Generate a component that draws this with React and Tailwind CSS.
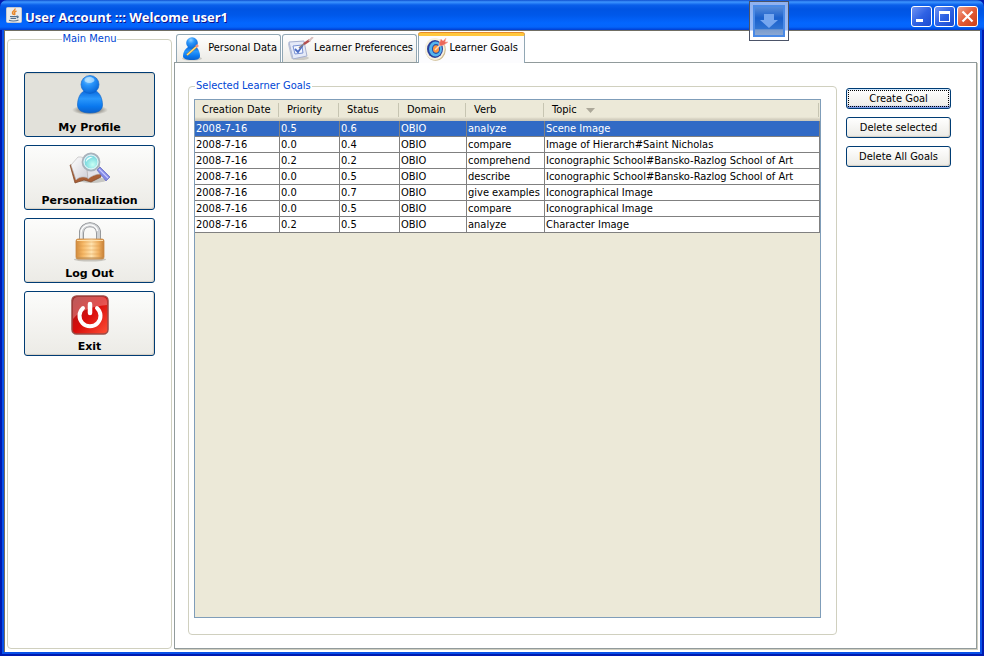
import { useState } from "react";

const goals = [
  { date: "2008-7-16", priority: "0.5", status: "0.6", domain: "OBIO", verb: "analyze", topic: "Scene Image" },
  { date: "2008-7-16", priority: "0.0", status: "0.4", domain: "OBIO", verb: "compare", topic: "Image of Hierarch#Saint Nicholas" },
  { date: "2008-7-16", priority: "0.2", status: "0.2", domain: "OBIO", verb: "comprehend", topic: "Iconographic School#Bansko-Razlog School of Art" },
  { date: "2008-7-16", priority: "0.0", status: "0.5", domain: "OBIO", verb: "describe", topic: "Iconographic School#Bansko-Razlog School of Art" },
  { date: "2008-7-16", priority: "0.0", status: "0.7", domain: "OBIO", verb: "give examples", topic: "Iconographical Image" },
  { date: "2008-7-16", priority: "0.0", status: "0.5", domain: "OBIO", verb: "compare", topic: "Iconographical Image" },
  { date: "2008-7-16", priority: "0.2", status: "0.5", domain: "OBIO", verb: "analyze", topic: "Character Image" },
];

const columns = [
  { key: "date", label: "Creation Date", width: "w-[85px]" },
  { key: "priority", label: "Priority", width: "w-[60px]" },
  { key: "status", label: "Status", width: "w-[60px]" },
  { key: "domain", label: "Domain", width: "w-[67px]" },
  { key: "verb", label: "Verb", width: "w-[78px]" },
  { key: "topic", label: "Topic", width: "", sorted: true },
];

/* Icons */
function JavaIcon() {
  return (
    <svg width="16" height="16" viewBox="0 0 16 16" fill="none">
      <rect x="0.5" y="0.5" width="15" height="15" rx="1" fill="#ececec" stroke="#c4c8d0" />
      <path d="M9 1.5C9.5 3.5 6 4 6.500 6C6.700 7 7.500 7.300 7.500 8M10.500 4C8.500 4.700 8 5.500 8.700 6.500C9 7.200 8.700 7.700 8.300 8" stroke="#e8872b" strokeWidth="1.500" />
      <path d="M4 9.500H10.500M4.500 11.300H10M10.500 9.300C12.500 8.800 12.800 10.300 10.600 11M3 13.300C5 14.300 10 14.300 12.500 13" stroke="#54708f" strokeWidth="1.200" />
    </svg>
  );
}

function ProfileIcon() {
  return (
    <svg width="36" height="42" viewBox="0 0 36 42" className="block">
      <defs>
        <radialGradient id="profileHead" cx="0.4" cy="0.25" r="0.75">
          <stop offset="0" stopColor="#8fd0ff" />
          <stop offset="0.400" stopColor="#2b96fb" />
          <stop offset="1" stopColor="#0766d8" />
        </radialGradient>
        <linearGradient id="profileBody" x1="0" y1="0" x2="0" y2="1">
          <stop offset="0" stopColor="#0b6adf" />
          <stop offset="0.350" stopColor="#2a98fc" />
          <stop offset="0.700" stopColor="#0a78ee" />
          <stop offset="1" stopColor="#0a60cb" />
        </linearGradient>
        <radialGradient id="profileShadow">
          <stop offset="0.500" stopColor="#6b675f" stopOpacity="0.700" />
          <stop offset="1" stopColor="#6b675f" stopOpacity="0" />
        </radialGradient>
      </defs>
      <ellipse cx="18" cy="35" rx="18" ry="5" fill="url(#profileShadow)" />
      <path d="M12 16C8 18 5.500 24 5.500 30C5.500 35 10 38 18 38C26 38 30.500 35 30.500 30C30.500 24 28 18 24 16Z" fill="url(#profileBody)" stroke="#0a5fc5" strokeWidth="0.600" />
      <circle cx="18" cy="9.500" r="9" fill="url(#profileHead)" stroke="#0a5fc5" strokeWidth="0.600" />
      <ellipse cx="17.500" cy="5" rx="5" ry="3" fill="#d9f1ff" opacity="0.600" />
    </svg>
  );
}

function BookSearchIcon() {
  return (
    <svg width="42" height="34" viewBox="0 0 42 34" className="block">
      <defs>
        <linearGradient id="bookPage" x1="0" y1="0" x2="1" y2="1">
          <stop offset="0" stopColor="#ffffff" />
          <stop offset="1" stopColor="#cfcfd7" />
        </linearGradient>
        <radialGradient id="lensGlass" cx="0.600" cy="0.650" r="0.700">
          <stop offset="0" stopColor="#c9fff4" />
          <stop offset="0.600" stopColor="#7fdce0" />
          <stop offset="1" stopColor="#a8cfe8" />
        </radialGradient>
      </defs>
      <ellipse cx="23" cy="28" rx="14" ry="3" fill="#a9a9a4" opacity="0.600" />
      <path d="M1 13L6 31L15 28L22 30L32 25L28 8L16 12Z" fill="#a85f36" stroke="#7c4526" strokeWidth="0.700" />
      <path d="M2 13L9 5C13 4.500 16 6 17 8L19 26C14 24 10 25 7 28Z" fill="url(#bookPage)" stroke="#b6b3b5" strokeWidth="0.600" />
      <path d="M17 8C21 5 26 5 29 7L32 22C27 22 22 24 19 27Z" fill="#e2e2e8" stroke="#b6b3b5" strokeWidth="0.600" />
      <path d="M28 18L31 15L41 25L37 29Z" fill="#8187e6" stroke="#6468b8" strokeWidth="0.700" />
      <path d="M30 17L39 26" stroke="#c6c9ff" strokeWidth="1.300" />
      <circle cx="22" cy="10" r="8.500" fill="url(#lensGlass)" stroke="#a9b2bb" strokeWidth="1.800" />
      <circle cx="22" cy="10" r="7" fill="none" stroke="#eef7fa" strokeWidth="1" />
      <path d="M17 10C17 6 20 4.500 24 5C22 6 19 7 17 10Z" fill="#f3ffff" />
    </svg>
  );
}

function LockIcon() {
  return (
    <svg width="32" height="40" viewBox="0 0 32 40" className="block">
      <defs>
        <linearGradient id="lockBody">
          <stop offset="0" stopColor="#d18a3b" />
          <stop offset="0.250" stopColor="#f6b866" />
          <stop offset="0.550" stopColor="#ffe2ae" />
          <stop offset="0.800" stopColor="#f1b263" />
          <stop offset="1" stopColor="#c67f35" />
        </linearGradient>
      </defs>
      <ellipse cx="16" cy="37.500" rx="16" ry="2" fill="#aaa79d" opacity="0.600" />
      <path d="M7.500 19V11C7.500 0 24.500 0 24.500 11V19" fill="none" stroke="#85878b" strokeWidth="5" />
      <path d="M7.500 19V11C7.500 0 24.500 0 24.500 11V19" fill="none" stroke="#cfd1d3" strokeWidth="3.500" />
      <path d="M7 19V11C7 1 22 0 23.500 9" fill="none" stroke="#ffffff" strokeWidth="1.200" />
      <rect x="2" y="17" width="28" height="20" rx="2" fill="url(#lockBody)" stroke="#c98a48" strokeWidth="0.800" />
      <path d="M3 20H29M3 24H29M3 28H29M3 32H29" stroke="#d99546" strokeWidth="1" opacity="0.400" />
      <path d="M3 18.500H29" stroke="#ffe0ac" strokeWidth="1" />
      <path d="M3 36H29" stroke="#b98b55" strokeWidth="1" />
    </svg>
  );
}

function PowerIcon() {
  return (
    <svg width="38" height="40" viewBox="0 0 38 40" className="block">
      <defs>
        <linearGradient id="powerFill" x1="0" y1="0" x2="1" y2="1">
          <stop offset="0" stopColor="#9d1c1c" />
          <stop offset="0.500" stopColor="#d90d0b" />
          <stop offset="1" stopColor="#ff5136" />
        </linearGradient>
      </defs>
      <rect x="1" y="1" width="36" height="38" rx="4.500" fill="url(#powerFill)" stroke="#9b4a45" strokeWidth="1.500" />
      <path d="M2 7Q2 2 7 2H31Q36 2 36 7V10C25 11 10 14 2 24Z" fill="#ffffff" opacity="0.280" />
      <path d="M12 13A10.500 10.500 0 1 0 26 13" fill="none" stroke="#ffffff" strokeWidth="4" strokeLinecap="round" />
      <path d="M19 9V18" stroke="#ffffff" strokeWidth="4.500" strokeLinecap="round" />
    </svg>
  );
}

function PersonEditIcon() {
  return (
    <svg width="20" height="24" viewBox="0 0 20 24">
      <ellipse cx="10" cy="21.500" rx="10" ry="2" fill="#a2a19a" opacity="0.500" />
      <path d="M6 10C3 12 1 15 1 19C1 21.500 4 23 10 23C16 23 18 21.500 18 19C18 15 16 11 14 10Z" fill="url(#profileBody)" />
      <circle cx="10" cy="6" r="5.800" fill="url(#profileHead)" />
      <path d="M5 18L14 10" stroke="#b47a2a" strokeWidth="2.200" />
      <path d="M5 18L14 10" stroke="#ffe07c" strokeWidth="1.500" />
      <path d="M14 10L16 8" stroke="#f0957f" strokeWidth="2.500" />
    </svg>
  );
}

function PreferencesIcon() {
  return (
    <svg width="26" height="24" viewBox="0 0 26 24">
      <ellipse cx="12" cy="21" rx="9" ry="2" fill="#b5b4ae" opacity="0.600" />
      <path d="M1 5L16 4L19 19L5 22Z" fill="#e5eaf8" stroke="#a5afcf" />
      <path d="M1 5L5 22L3 20L0 7Z" fill="#b9c1d8" />
      <path d="M5 9L14 8L15 16L7 17Z" fill="#f5f8ff" stroke="#7790d2" />
      <path d="M7 12L10 15L15 8" fill="none" stroke="#4c6dc5" strokeWidth="1.800" />
      <path d="M11 11L17 6" stroke="#8a7f7f" strokeWidth="1.500" />
      <path d="M16 7L22 3" stroke="#b54f4f" strokeWidth="2.500" />
      <path d="M21 4L25 0" stroke="#d9bfbf" strokeWidth="2" />
    </svg>
  );
}

function TargetIcon() {
  return (
    <svg width="24" height="24" viewBox="0 0 24 24">
      <ellipse cx="11.500" cy="12.800" rx="10.300" ry="11" fill="#cdb98c" />
      <ellipse cx="10.800" cy="12" rx="10" ry="11" fill="#f6f0df" />
      <ellipse cx="11" cy="12" rx="8" ry="9" fill="#2c3f9a" />
      <ellipse cx="11.500" cy="12" rx="6.500" ry="7.500" fill="#55b5ed" />
      <ellipse cx="12" cy="12" rx="4" ry="5" fill="#244da8" />
      <ellipse cx="12" cy="12" rx="3" ry="3.800" fill="#ff963f" />
      <path d="M11 13L17 7" stroke="#ffd7b8" strokeWidth="1.500" />
      <path d="M15 7L17 2L19 4L22 1L21 5L24 5L20 8L16 9Z" fill="#ed685b" stroke="#f6b2a6" strokeWidth="0.600" />
    </svg>
  );
}

const menuItems = [
  { label: "My Profile", Icon: ProfileIcon },
  { label: "Personalization", Icon: BookSearchIcon },
  { label: "Log Out", Icon: LockIcon },
  { label: "Exit", Icon: PowerIcon },
];

const tabs = [
  { label: "Personal Data", Icon: PersonEditIcon, width: "w-[105px]" },
  { label: "Learner Preferences", Icon: PreferencesIcon, width: "w-[135px]" },
  { label: "Learner Goals", Icon: TargetIcon, width: "w-[107px]" },
];

const captionButton = "flex h-[21px] w-[21px] items-center justify-center rounded-[3px] border border-white";

function TitleBar() {
  return (
    <header className="relative flex h-[30px] shrink-0 items-center rounded-t-[7px] bg-[linear-gradient(to_bottom,#0f4fd0_0px,#3d95ff_2px,#0a5fea_5px,#0054e3_9px,#0058ea_15px,#0366ff_23px,#0464fb_27px,#003dd0_30px)] pr-[6px] pl-[6px]">
      <JavaIcon />
      <h1 className="ml-[3px] flex-1 pt-[4px] font-['Open_Sans','Noto_Sans',sans-serif] text-[13px] leading-4 font-bold whitespace-nowrap text-white [text-shadow:1px_1px_0_#0f1089]">
        User Account ::: Welcome user1
      </h1>

      <div className="flex gap-[2px] pt-[3px]">
        <button aria-label="Minimize" className={`${captionButton} bg-linear-to-br from-[#6f92f2] via-[#2f62e4] to-[#1a4ad0]`}>
          <svg width="19" height="19" viewBox="0 0 19 19">
            <path d="M4 12H11V15H4Z" fill="#fff" />
          </svg>
        </button>
        <button aria-label="Maximize" className={`${captionButton} bg-linear-to-br from-[#6f92f2] via-[#2f62e4] to-[#1a4ad0]`}>
          <svg width="19" height="19" viewBox="0 0 19 19">
            <path d="M4 4H15V15H4ZM5 7V14H14V7Z" fill="#fff" fillRule="evenodd" />
          </svg>
        </button>
        <button aria-label="Close" className={`${captionButton} bg-linear-to-br from-[#f0a088] via-[#e35a35] to-[#cc3f14]`}>
          <svg width="19" height="19" viewBox="0 0 19 19">
            <path d="M4.500 4.500L14.500 14.500M14.500 4.500L4.500 14.500" stroke="#fff" strokeWidth="2.200" />
          </svg>
        </button>
      </div>

      {/* Floating drop target */}
      <button
        aria-label="Drop target"
        className="absolute top-[1px] right-[195px] z-10 flex h-10 w-10 items-center justify-center border border-[#4c5468] bg-[linear-gradient(to_bottom,#8fb1f0_0px,#9dbdf6_28px,#ffffff_29px)]"
      >
        <svg width="32" height="32" viewBox="0 0 32 32">
          <defs>
            <linearGradient id="dropFill" x1="0" y1="0" x2="0" y2="1">
              <stop offset="0" stopColor="#5b8fdb" />
              <stop offset="0.400" stopColor="#1a60cc" />
              <stop offset="0.750" stopColor="#2f73d2" />
              <stop offset="0.800" stopColor="#7b9dce" />
              <stop offset="1" stopColor="#8faad3" />
            </linearGradient>
          </defs>
          <rect x="1" y="1" width="30" height="30" fill="url(#dropFill)" stroke="#4a8ae6" strokeWidth="2" />
          <path d="M11 9H21V15H25L16 23L7 15H11Z" fill="#75a6ef" />
        </svg>
      </button>
    </header>
  );
}

function MainMenu() {
  const [active, setActive] = useState("My Profile");

  return (
    <fieldset className="w-[165px] shrink-0 rounded-[4px] border border-[#d0d0bf] px-[16px]">
      <legend className="mx-auto h-[14px] px-px leading-[14px] text-[#0046d5]">Main Menu</legend>
      <div className="flex flex-col gap-2 pt-[26px]">
        {menuItems.map(({ label, Icon }) => (
          <button
            key={label}
            onClick={() => setActive(label)}
            className={`flex h-[65px] flex-col items-center justify-between rounded-[3px] border border-[#003c74] pt-px pb-px font-['DejaVu_Sans',sans-serif] text-[11px] leading-[14px] font-bold ${
              active === label
                ? "bg-[#e2e1da] shadow-[inset_0_1px_1px_#cfcdc4]"
                : "bg-linear-to-b from-[#fcfcfb] to-[#ecebe6] shadow-[inset_-1px_-1px_1px_#d6d0c5]"
            }`}
          >
            <span className="flex h-[43px] items-center">
              <Icon />
            </span>
            <span>{label}</span>
          </button>
        ))}
      </div>
    </fieldset>
  );
}

function GoalsTable() {
  return (
    <div className="min-h-0 flex-1 border border-[#7f9db9] bg-[#ece9d8]">
      <table className="w-full table-fixed border-collapse">
        <thead>
          <tr className="h-[21px] bg-[linear-gradient(to_bottom,#ece9d8_0px,#ece9d8_17px,#e2decd_18px,#d6d2c2_19px,#cbc7b8_21px)]">
            {columns.map((col) => (
              <th key={col.key} className={`${col.width} p-0 text-left font-normal`}>
                <div className="mr-px mb-px flex h-[14px] items-center gap-[9px] border-r border-[#c7c5b2] pl-[7px] leading-[14px] whitespace-nowrap">
                  {col.label}
                  {col.sorted && (
                    <svg width="9" height="5" viewBox="0 0 9 5">
                      <path d="M0 0H9L4.500 5Z" fill="#aca899" />
                    </svg>
                  )}
                </div>
              </th>
            ))}
          </tr>
        </thead>
        <tbody>
          {goals.map((goal, i) => (
            <tr key={i} className={i === 0 ? "bg-[#316ac5] text-white" : "bg-white"}>
              {columns.map((col) => (
                <td key={col.key} className="p-0">
                  <div className="h-4 overflow-hidden border-r border-b border-[#808080] pl-px leading-[15px] whitespace-nowrap">
                    {goal[col.key]}
                  </div>
                </td>
              ))}
            </tr>
          ))}
        </tbody>
      </table>
    </div>
  );
}

const actionButton =
  "h-[21px] rounded-[3px] border border-[#003c74] bg-linear-to-b from-white to-[#ecebe6] leading-[15px] whitespace-nowrap";

export default function App() {
  return (
    <div className="flex min-h-screen flex-col bg-[#001ab0] font-['DejaVu_Sans_Condensed','DejaVu_Sans',sans-serif] text-[11px] text-black">
      <TitleBar />

      <main className="mx-[2px] mb-[2px] flex flex-1 border-x-2 border-b-2 border-[#0850e8] bg-white pt-[2px] pr-[3px] pb-[3px] pl-[3px] shadow-[inset_1px_1px_0_#716f64]">
        <MainMenu />

        <section className="ml-[2px] flex min-w-0 flex-1 flex-col">
          {/* Tabs */}
          <div role="tablist" className="flex h-[30px] shrink-0 items-end pl-[2px]">
            {tabs.map(({ label, Icon, width }) => {
              const selected = label === "Learner Goals";
              return (
                <button
                  key={label}
                  role="tab"
                  aria-selected={selected}
                  className={`${width} flex items-center justify-between whitespace-nowrap border-[#91a7b4] pl-[5px] ${
                    selected
                      ? "relative -mb-px h-[30px] rounded-t-[3px] border-x border-t-3 border-t-[#ffc73c] bg-[#fcfcfe] pr-[6px] pb-[2px] shadow-[0_-1px_0_#e68b2c]"
                      : "mr-px h-7 rounded-t-[3px] border-x border-t bg-linear-to-b from-white to-[#ecebe6] pr-[3px]"
                  }`}
                >
                  <Icon />
                  <span>{label}</span>
                </button>
              );
            })}
          </div>

          {/* Tab panel */}
          <div role="tabpanel" className="flex flex-1 gap-[9px] border border-[#919b9c] pt-[16px] pr-[25px] pb-[13px] pl-[13px] shadow-[1px_1px_0_#d0cec0]">
            <fieldset className="flex min-w-0 flex-1 flex-col rounded-[4px] border border-[#d0d0bf] pr-[15px] pb-[16px] pl-[5px]">
              <legend className="ml-px h-[14px] px-px leading-[14px] text-[#0046d5]">Selected Learner Goals</legend>
              <div className="flex min-h-0 flex-1 flex-col pt-[6px]">
                <GoalsTable />
              </div>
            </fieldset>

            <div className="flex w-[105px] shrink-0 flex-col gap-2 pt-[9px]">
              <button className={`${actionButton} p-px shadow-[inset_0_-2px_1px_#7d9be6,inset_0_1px_0_#cee7ff]`}>
                <span className="block h-[17px] border border-dotted border-black leading-[15px]">Create Goal</span>
              </button>
              <button className={`${actionButton} shadow-[inset_-1px_-1px_1px_#d6d0c5]`}>Delete selected</button>
              <button className={`${actionButton} shadow-[inset_-1px_-1px_1px_#d6d0c5]`}>Delete All Goals</button>
            </div>
          </div>
        </section>
      </main>
    </div>
  );
}
